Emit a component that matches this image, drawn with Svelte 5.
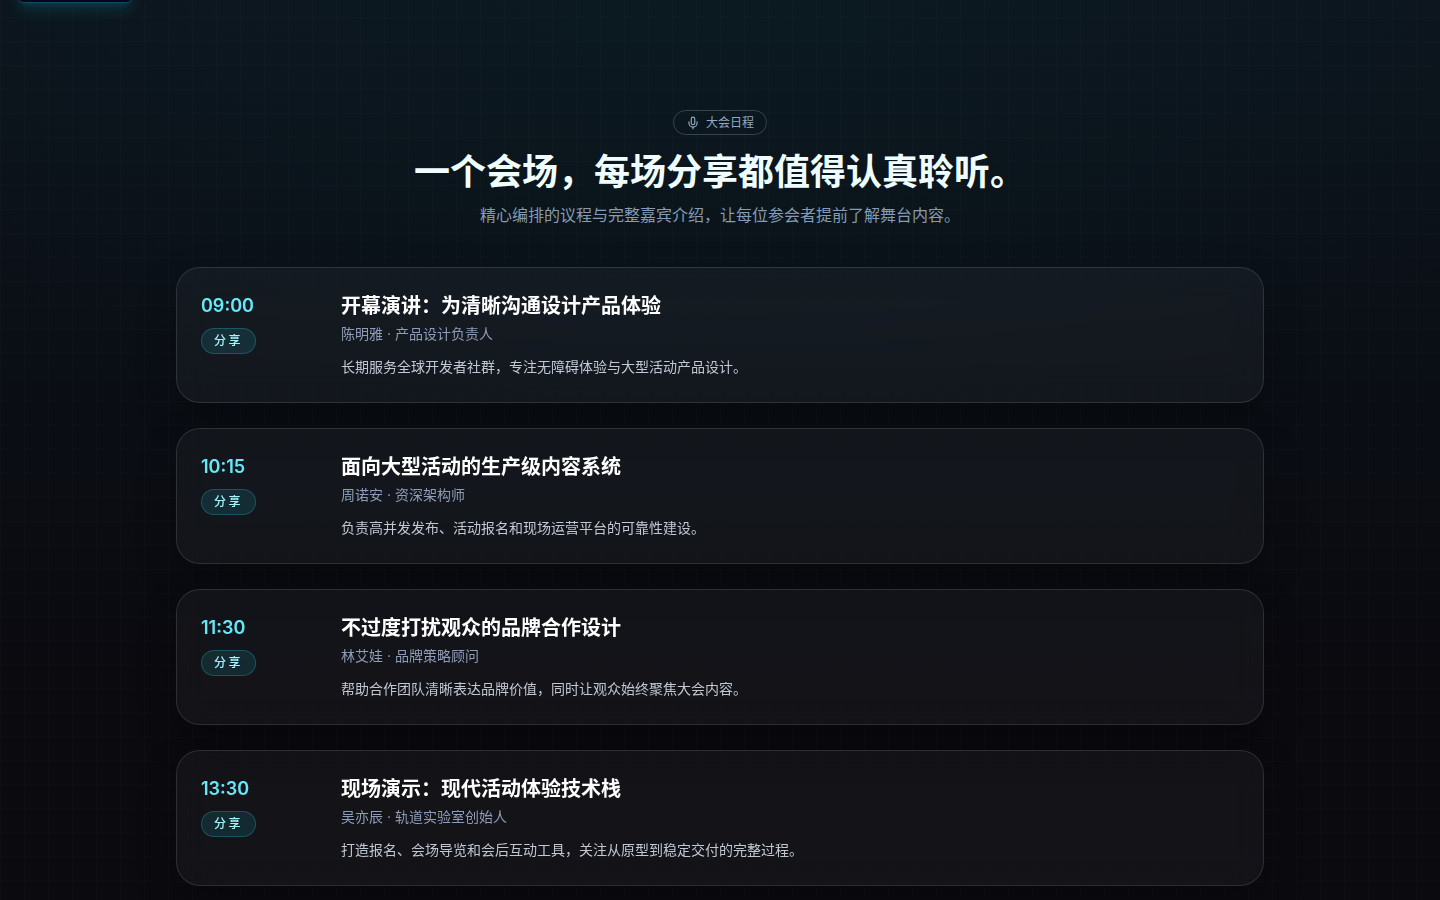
<script lang="ts">
  type Session = {
    time: string;
    title: string;
    speaker: string;
    role: string;
    bio: string;
  };

  const sessions: Session[] = [
    {
      time: "09:00",
      title: "开幕演讲：为清晰沟通设计产品体验",
      speaker: "陈明雅",
      role: "产品设计负责人",
      bio: "长期服务全球开发者社群，专注无障碍体验与大型活动产品设计。",
    },
    {
      time: "10:15",
      title: "面向大型活动的生产级内容系统",
      speaker: "周诺安",
      role: "资深架构师",
      bio: "负责高并发发布、活动报名和现场运营平台的可靠性建设。",
    },
    {
      time: "11:30",
      title: "不过度打扰观众的品牌合作设计",
      speaker: "林艾娃",
      role: "品牌策略顾问",
      bio: "帮助合作团队清晰表达品牌价值，同时让观众始终聚焦大会内容。",
    },
    {
      time: "13:30",
      title: "现场演示：现代活动体验技术栈",
      speaker: "吴亦辰",
      role: "轨道实验室创始人",
      bio: "打造报名、会场导览和会后互动工具，关注从原型到稳定交付的完整过程。",
    },
  ];
</script>

<div class="page">
  <a class="skip" href="#agenda">跳到主要内容</a>

  <main class="agenda" id="agenda">
    <header class="intro">
      <span class="eyebrow">
        <svg class="mic" viewBox="0 0 24 24" aria-hidden="true">
          <path d="M12 19v3" />
          <path d="M19 10v2a7 7 0 0 1-14 0v-2" />
          <rect x="9" y="2" width="6" height="13" rx="3" />
        </svg>
        大会日程
      </span>
      <h1>一个会场，每场分享都值得认真聆听。</h1>
      <p class="lead">精心编排的议程与完整嘉宾介绍，让每位参会者提前了解舞台内容。</p>
    </header>

    <ol class="sessions">
      {#each sessions as session (session.time)}
        <li class="card">
          <div>
            <time class="time" datetime={session.time}>{session.time}</time>
            <span class="tag">分享</span>
          </div>
          <div>
            <h2>{session.title}</h2>
            <p class="speaker">{session.speaker} · {session.role}</p>
            <p class="bio">{session.bio}</p>
          </div>
        </li>
      {/each}
    </ol>
  </main>
</div>

<style>
  :global(body) {
    background: #09090d;
  }

  .page {
    position: relative;
    overflow: hidden;
    min-height: 100vh;
    box-sizing: border-box;
    color: #f8fafc;
    font-family: Inter, "Noto Sans CJK SC", sans-serif;
    background:
      linear-gradient(rgb(255 255 255 / 1%) 1px, transparent 1px) 0 17px / 24px 24px,
      linear-gradient(90deg, rgb(255 255 255 / 1%) 1px, transparent 1px) 0 0 / 24px 24px,
      radial-gradient(ellipse 1000px 420px at 50% 0, rgb(8 34 42 / 40%), transparent),
      linear-gradient(#0d141c, #0a0e14 45%, #0a0a0f 75%);
  }

  .skip {
    position: absolute;
    top: -35px;
    left: 16px;
    padding: 8px 16px;
    border: 1px solid #0e4a63;
    border-radius: 8px;
    background: #020617;
    box-shadow:
      0 10px 15px -3px rgb(34 211 238 / 15%),
      0 4px 6px -4px rgb(34 211 238 / 15%);
    color: #cffafe;
    font-size: 14px;
    line-height: 20px;
    text-decoration: none;

    &:focus-visible {
      top: 16px;
    }
  }

  .agenda {
    max-width: 1088px;
    margin: 0 auto;
    padding: 110px 32px 14px;
  }

  .intro {
    display: flex;
    flex-direction: column;
    align-items: center;
    margin-bottom: 40px;
    text-align: center;
  }

  .eyebrow {
    display: inline-flex;
    align-items: center;
    gap: 6px;
    padding: 4px 12px;
    border: 1px solid #37444c;
    border-radius: 999px;
    color: #94a8bf;
    font-size: 12px;
    line-height: 15px;
  }

  .mic {
    width: 14px;
    height: 14px;
    fill: none;
    stroke: currentColor;
    stroke-width: 2;
    stroke-linecap: round;
    stroke-linejoin: round;
  }

  h1,
  h2,
  p {
    margin: 0;
  }

  h1 {
    margin-top: 16px;
    color: #f0fdff;
    font-size: 36px;
    font-weight: 600;
    line-height: 42px;
  }

  .lead {
    margin-top: 10px;
    color: #849cb5;
    font-size: 16px;
    line-height: 24px;
  }

  .sessions {
    display: grid;
    gap: 25px;
    margin: 0;
    padding: 0;
    list-style: none;
  }

  .card {
    display: grid;
    grid-template-columns: 120px 1fr;
    gap: 20px;
    padding: 24px;
    border: 1px solid rgb(255 255 255 / 12%);
    border-radius: 24px;
    background: rgb(255 255 255 / 4%);
    backdrop-filter: blur(16px);
    box-shadow: 0 16px 40px rgb(0 0 0 / 22%);
  }

  .time {
    display: block;
    color: #67e8f9;
    font-size: 18px;
    font-weight: 600;
    line-height: 28px;
  }

  .tag {
    display: inline-block;
    margin-top: 8px;
    padding: 4px 12px;
    border: 1px solid rgb(34 211 238 / 25%);
    border-radius: 999px;
    background: rgb(34 211 238 / 12%);
    color: #a5f3fc;
    font-size: 12px;
    font-weight: 500;
    line-height: 16px;
    letter-spacing: 0.2em;
  }

  h2 {
    color: #fff;
    font-size: 20px;
    font-weight: 600;
    line-height: 28px;
  }

  .speaker {
    margin-top: 4px;
    color: #8f9db8;
    font-size: 14px;
    line-height: 20px;
  }

  .bio {
    margin-top: 12px;
    color: #c0c8d4;
    font-size: 14px;
    line-height: 22px;
  }

  @media (max-width: 640px) {
    .agenda {
      padding-inline: 16px;
    }

    .card {
      grid-template-columns: 1fr;
    }
  }
</style>
